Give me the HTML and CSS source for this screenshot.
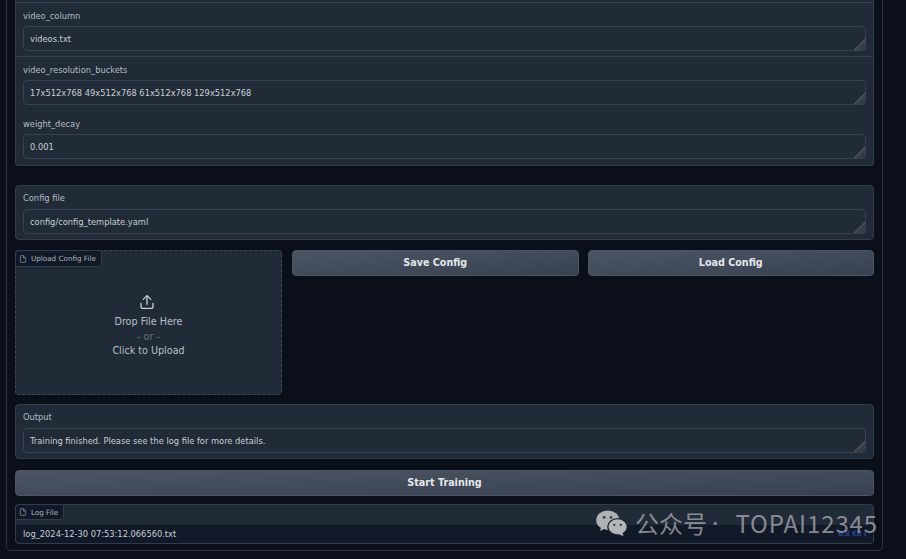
FILE: index.html
```html
<!DOCTYPE html>
<html lang="en">
<head>
<meta charset="utf-8">
<title>Training</title>
<link rel="stylesheet" href="styles.css">
</head>
<body>
<main class="shell">
  <section class="panel group">
    <div class="sliver"></div>
    <div class="field field-sep">
      <label class="label">video_column</label>
      <div class="input">videos.txt</div>
    </div>
    <div class="field field-mid">
      <label class="label">video_resolution_buckets</label>
      <div class="input">17x512x768 49x512x768 61x512x768 129x512x768</div>
    </div>
    <div class="field">
      <label class="label">weight_decay</label>
      <div class="input">0.001</div>
    </div>
  </section>

  <section class="panel field config">
    <label class="label">Config file</label>
    <div class="input">config/config_template.yaml</div>
  </section>

  <div class="config-row">
    <div class="upload">
      <div class="tab"><svg class="file-icon" viewBox="0 0 24 24"><path d="M13 2H6a2 2 0 0 0-2 2v16a2 2 0 0 0 2 2h12a2 2 0 0 0 2-2V9z"/><path d="M13 2v7h7"/></svg>Upload Config File</div>
      <div class="drop">
        <svg class="upload-icon" viewBox="0 0 24 24"><path d="M12 15V4"/><path d="M7 8.500 12 3.500l5 5"/><path d="M4 14v4a2.500 2.500 0 0 0 2.500 2.500h11A2.500 2.500 0 0 0 20 18v-4"/></svg>
        <div class="drop-main">Drop File Here</div>
        <div class="drop-or">- or -</div>
        <div class="drop-main">Click to Upload</div>
      </div>
    </div>
    <div class="actions">
      <button class="btn">Save Config</button>
      <button class="btn">Load Config</button>
    </div>
  </div>

  <section class="panel field output">
    <label class="label">Output</label>
    <div class="input">Training finished. Please see the log file for more details.</div>
  </section>

  <button class="btn btn-wide">Start Training</button>

  <section class="panel log">
    <div class="log-head">
      <div class="tab tab-log"><svg class="file-icon" viewBox="0 0 24 24"><path d="M13 2H6a2 2 0 0 0-2 2v16a2 2 0 0 0 2 2h12a2 2 0 0 0 2-2V9z"/><path d="M13 2v7h7"/></svg>Log File</div>
    </div>
    <div class="log-row">
      <span>log_2024-12-30 07:53:12.066560.txt</span>
      <span class="size">6.8 KB ⭳</span>
    </div>
  </section>
</main>

<div class="watermark">
  <svg class="wechat" viewBox="0 0 34 28">
    <ellipse cx="12.500" cy="11" rx="12.500" ry="10.500" fill="#b0b1b5"/>
    <path d="M5 17 4.500 23 10 19z" fill="#b0b1b5"/>
    <ellipse cx="23" cy="18" rx="10.500" ry="8.800" fill="#b4b5b9" stroke="#1a202b" stroke-width="1.400"/>
    <path d="M28 24 29.500 28 24 26z" fill="#b4b5b9"/>
    <circle cx="8.500" cy="8" r="1.500" fill="#3a3e46"/>
    <circle cx="16" cy="8" r="1.500" fill="#3a3e46"/>
    <circle cx="19.500" cy="16" r="1.300" fill="#3a3e46"/>
    <circle cx="26.500" cy="16" r="1.300" fill="#3a3e46"/>
  </svg>
  <span class="wm-cjk">公众号</span>
  <span class="wm-dot">·</span>
  <span class="wm-id">TOPAI12345</span>
</div>
</body>
</html>
```
FILE: styles.css
```css
* { box-sizing: border-box; }

html, body {
  margin: 0;
  height: 559px;
  overflow: hidden;
  background: #0b0f19;
}

body {
  position: relative;
  font-family: "DejaVu Sans", sans-serif;
  color: #c9ced6;
  font-size: 8.300px;
}

.shell {
  width: 877px;
  height: 551px;
  margin-left: 6px;
  padding: 0 8px;
  border: 1px solid #2c3442;
  border-top: 0;
  border-radius: 0 0 5px 5px;
}

.panel {
  background: #212a37;
  border: 1px solid #333c4a;
  border-radius: 4px;
}

.group {
  height: 166px;
  border-top: 0;
  border-radius: 0 0 4px 4px;
}

.sliver {
  height: 3px;
  border-bottom: 1px solid #374151;
}

.field {
  padding: 8px 7px 5px;
}

.field-sep {
  height: 54px;
  border-bottom: 1px solid #374151;
}

.field-mid {
  height: 54px;
}

.field .label {
  display: block;
  height: 11px;
  line-height: 11px;
  margin-bottom: 4px;
  color: #b4bac3;
  font-size: 8.300px;
}

.config .label,
.output .label {
  margin-top: -1px;
  margin-bottom: 5px;
}

.input {
  position: relative;
  height: 25px;
  padding: 0 6px;
  line-height: 24px;
  background: #212a37;
  border: 1px solid #374151;
  border-radius: 4px;
  color: #c9ced6;
}

.input::after {
  content: "";
  position: absolute;
  right: 0;
  bottom: 0;
  width: 12px;
  height: 12px;
  border-bottom-right-radius: 3px;
  background: repeating-linear-gradient(135deg, #2a323e 0 1px, #4c525b 1px 2px);
  clip-path: polygon(100% 0, 100% 100%, 0 100%);
}

.config {
  height: 55px;
  margin-top: 19px;
}

.config-row {
  display: flex;
  gap: 10px;
  height: 145px;
  margin-top: 10px;
}

.upload {
  position: relative;
  flex: 0 0 267px;
  background: #212a37;
  border: 1px dashed #3d4757;
  border-radius: 4px;
}

.tab {
  position: absolute;
  top: -1px;
  left: -1px;
  display: flex;
  align-items: center;
  height: 17px;
  padding: 0 5px 0 3px;
  background: #111827;
  border: 1px solid #333c4a;
  border-radius: 4px 0 4px 0;
  font-size: 7.200px;
  color: #aeb4bd;
}

.file-icon {
  width: 8px;
  height: 8px;
  margin-right: 4px;
  fill: none;
  stroke: #9ca3af;
  stroke-width: 2;
}

.drop {
  display: flex;
  flex-direction: column;
  align-items: center;
  height: 100%;
  padding-top: 42px;
}

.upload-icon {
  width: 18px;
  height: 18px;
  margin: 0 4px 4px 0;
  fill: none;
  stroke: #c5cad2;
  stroke-width: 1.800;
  stroke-linecap: round;
  stroke-linejoin: round;
}

.drop-main {
  font-size: 9.600px;
  line-height: 14px;
  color: #b9bfc8;
}

.drop-or {
  font-size: 9.600px;
  line-height: 15px;
  color: #6b7280;
}

.actions {
  display: flex;
  flex: 1;
  gap: 9px;
  align-items: flex-start;
}

.btn {
  flex: 1;
  height: 26px;
  padding: 0 0 2px;
  background: linear-gradient(to bottom right, #4b5563, #374151);
  border: 1px solid #4b5563;
  border-radius: 4px;
  color: #e5e7eb;
  font-family: "DejaVu Sans", sans-serif;
  font-size: 9.600px;
  font-weight: 700;
}

.output {
  height: 55px;
  margin-top: 9px;
}

.btn-wide {
  display: block;
  width: 100%;
  margin-top: 11px;
}

.log {
  height: 40px;
  margin-top: 8px;
}

.log-head {
  position: relative;
  height: 20px;
}

.tab-log {
  height: 16px;
  padding: 0 5px 0 3px;
}

.log-row {
  display: flex;
  justify-content: space-between;
  align-items: center;
  height: 18px;
  padding: 0 7px;
  background: #111827;
  border-radius: 0 0 4px 4px;
  color: #c9ced6;
}

.size {
  font-size: 7.200px;
  color: #2e5bc4;
}

.watermark {
  position: absolute;
  left: 596px;
  top: 509px;
  display: flex;
  align-items: center;
  font-family: "Noto Sans CJK SC", "Noto Sans", sans-serif;
  font-size: 24px;
  line-height: 28px;
  color: rgba(190, 191, 195, 0.68);
  white-space: nowrap;
}

.wechat {
  width: 32px;
  height: 26px;
  margin-right: 7px;
}

.wm-dot {
  margin: 0 17px 0 5px;
  font-family: "Noto Sans", sans-serif;
}

.wm-id {
  font-size: 24px;
  letter-spacing: 0.900px;
}
```
